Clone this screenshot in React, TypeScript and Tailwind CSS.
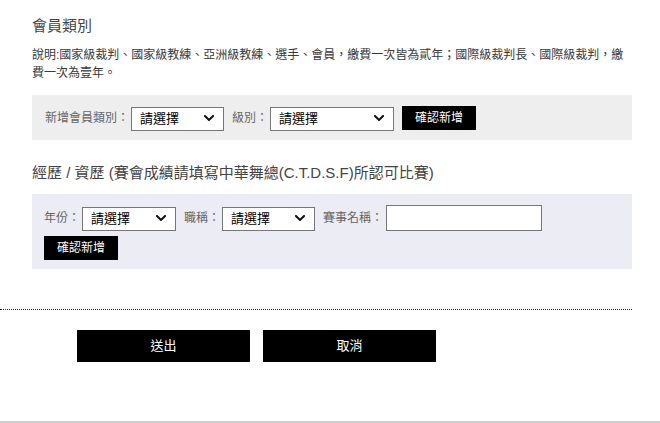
import React from "react";

const FONT = "font-['Liberation_Sans','Noto_Sans_CJK_TC',sans-serif]";

function Chevron() {
  return (
    <svg width="10" height="6" viewBox="0 0 10 6" aria-hidden="true">
      <path d="M1 1l4 4 4-4" fill="none" stroke="#111" strokeWidth="2" strokeLinecap="square" />
    </svg>
  );
}

function Select({ width }: { width: string }) {
  return (
    <div className={`relative h-[24px] ${width}`}>
      <select className="h-full w-full appearance-none border border-[#767676] bg-white pl-[8px] text-[13px] text-black">
        <option>請選擇</option>
      </select>
      {/* arrow */}
      <span className="pointer-events-none absolute right-[10px] top-[9px] flex">
        <Chevron />
      </span>
    </div>
  );
}

function Label({ text, first }: { text: string; first?: boolean }) {
  return (
    <span className={`${first ? "" : "ml-[8px]"} mr-[2px] text-[12px] text-[#666]`}>{text}</span>
  );
}

export default function App() {
  return (
    <div className={`${FONT} min-h-[423px] bg-white text-[#333]`}>
      <div className="w-[632px]">
        <div className="pl-[32px] pt-[15px]">
          {/* ── 會員類別 ── */}
          <h2 className="text-[15px] leading-[22px] text-[#444]">會員類別</h2>
          <p className="mt-[9px] text-[12px] leading-[18px] text-[#3a3a3a]">
            說明:國家級裁判、國家級教練、亞洲級教練、選手、會員，繳費一次皆為貳年；國際級裁判長、國際級裁判，繳費一次為壹年。
          </p>

          <div className="mt-[13px] flex items-center bg-[#eeeeee] pl-[13px] pt-[11px] pb-[10px]">
            <Label text="新增會員類別：" first />
            <Select width="w-[93px]" />
            <Label text="級別：" />
            <Select width="w-[124px]" />
            <button className="ml-[8px] h-[24px] w-[74px] bg-black text-[12px] text-white">確認新增</button>
          </div>

          {/* ── 經歷 / 資歷 ── */}
          <h2 className="mt-[22px] text-[15px] leading-[22px] text-[#444]">
            經歷 / 資歷 (賽會成績請填寫中華舞總(C.T.D.S.F)所認可比賽)
          </h2>

          <div className="mt-[10px] bg-[#ececf4] pl-[12px] pt-[11px] pb-[9px]">
            <div className="flex h-[26px] items-center">
              <Label text="年份：" first />
              <Select width="w-[94px]" />
              <Label text="職稱：" />
              <Select width="w-[93px]" />
              <Label text="賽事名稱：" />
              <input className="ml-[1px] h-[26px] w-[156px] border border-[#767676] bg-white" />
            </div>
            <button className="mt-[5px] h-[24px] w-[74px] bg-black text-[12px] text-white">確認新增</button>
          </div>
        </div>

        <div className="mt-[40px] border-t border-dotted border-[#222]" />

        <div className="mt-[20px] flex gap-[13px] pl-[77px]">
          <button className="h-[32px] w-[173px] bg-black text-[13px] text-white">送出</button>
          <button className="h-[32px] w-[173px] bg-black text-[13px] text-white">取消</button>
        </div>
      </div>

      <div className="mt-[59px] h-[2px] w-full bg-[#cccccc]" />
    </div>
  );
}
